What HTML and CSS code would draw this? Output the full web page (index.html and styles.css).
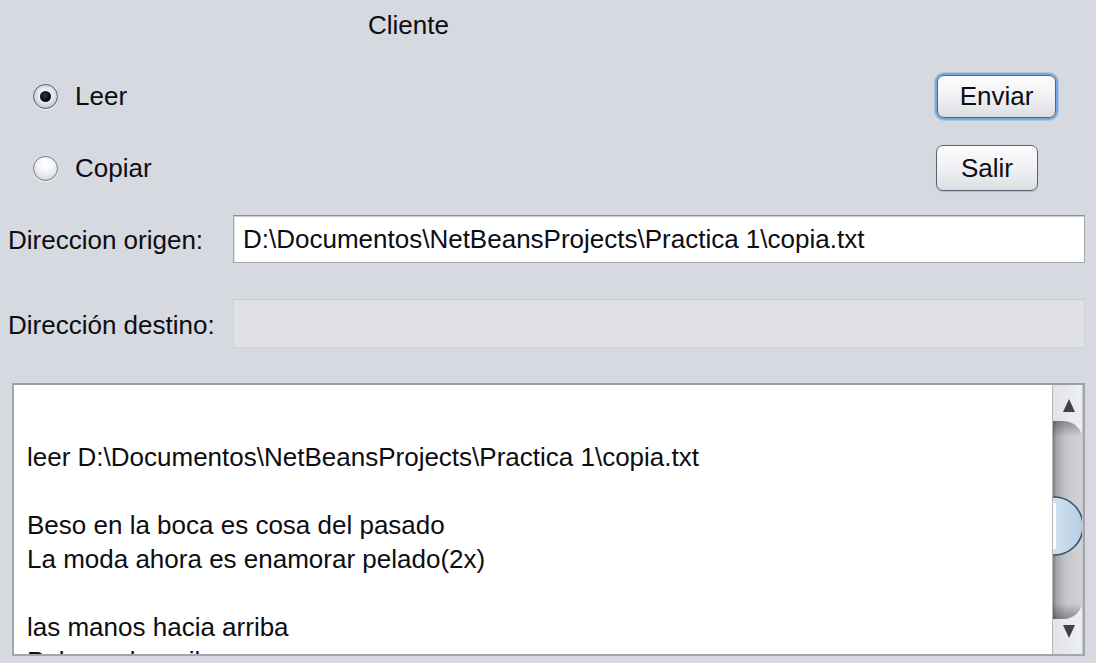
FILE: index.html
```html
<!DOCTYPE html>
<html>
<head>
<meta charset="utf-8">
<title>Cliente</title>
<link rel="stylesheet" href="styles.css">
</head>
<body>
<div class="window">
  <div class="title">Cliente</div>

  <div class="row row-leer">
    <label class="radio"><span class="radio-dot checked"></span><span class="radio-text">Leer</span></label>
    <div class="btn-cell"><button class="btn btn-enviar">Enviar</button></div>
  </div>

  <div class="row row-copiar">
    <label class="radio"><span class="radio-dot"></span><span class="radio-text">Copiar</span></label>
    <div class="btn-cell"><button class="btn btn-salir">Salir</button></div>
  </div>

  <div class="field-row row-origen">
    <span class="field-label">Direccion origen:</span>
    <div class="field">D:\Documentos\NetBeansProjects\Practica 1\copia.txt</div>
  </div>

  <div class="field-row row-destino">
    <span class="field-label">Dirección destino:</span>
    <div class="field disabled"></div>
  </div>

  <div class="textarea">
    <div class="text-viewport">
      <div class="text-content">
        <div class="line">&nbsp;</div>
        <div class="line">&nbsp;</div>
        <div class="line">leer D:\Documentos\NetBeansProjects\Practica 1\copia.txt</div>
        <div class="line">&nbsp;</div>
        <div class="line">Beso en la boca es cosa del pasado</div>
        <div class="line">La moda ahora es enamorar pelado(2x)</div>
        <div class="line">&nbsp;</div>
        <div class="line">las manos hacia arriba</div>
        <div class="line">Palmas de arriba</div>
      </div>
    </div>
    <svg class="scrollbar" width="31" height="269" viewBox="0 0 31 269">
      <defs>
        <linearGradient id="trackG" x1="0" y1="0" x2="1" y2="0">
          <stop offset="0" stop-color="#6e7075"/>
          <stop offset="0.15" stop-color="#a4a6aa"/>
          <stop offset="0.45" stop-color="#c5c6c9"/>
          <stop offset="1" stop-color="#d3d4d7"/>
        </linearGradient>
        <linearGradient id="shadeG" x1="0" y1="0" x2="0" y2="1">
          <stop offset="0" stop-color="#000" stop-opacity="0.3"/>
          <stop offset="0.08" stop-color="#000" stop-opacity="0"/>
          <stop offset="0.92" stop-color="#000" stop-opacity="0"/>
          <stop offset="1" stop-color="#000" stop-opacity="0.32"/>
        </linearGradient>
        <linearGradient id="knobG" x1="0" y1="0" x2="1" y2="0">
          <stop offset="0" stop-color="#e9f2f9"/>
          <stop offset="0.5" stop-color="#cfe2f0"/>
          <stop offset="1" stop-color="#b5cfe3"/>
        </linearGradient>
        <linearGradient id="btnG" x1="0" y1="0" x2="1" y2="0">
          <stop offset="0" stop-color="#e2e3e6"/>
          <stop offset="1" stop-color="#eeeff1"/>
        </linearGradient>
      </defs>
      <rect x="0" y="0" width="31" height="269" fill="url(#btnG)"/>
      <path d="M0,36 H11 A20,20 0 0 1 31,56 V214 A20,20 0 0 1 11,234 H0 Z" fill="url(#trackG)"/>
      <path d="M0,36 H11 A20,20 0 0 1 31,56 V214 A20,20 0 0 1 11,234 H0 Z" fill="url(#shadeG)"/>
      <circle cx="2" cy="141" r="29" fill="url(#knobG)" stroke="#3d546b" stroke-width="1.6"/>
      <rect x="1" y="118" width="3" height="46" fill="#ffffff" opacity="0.9"/>
      <rect x="0" y="0" width="1" height="269" fill="#b3b6bb"/>
      <rect x="30" y="0" width="1" height="269" fill="#c4c6ca"/>
      <polygon points="11,27 23,27 17,14" fill="#3f4145"/>
      <polygon points="11,240 23,240 17,253" fill="#3f4145"/>
    </svg>
  </div>
</div>
</body>
</html>
```

FILE: styles.css
```css
* {
  box-sizing: border-box;
}

body {
  margin: 0;
  background: #d6d9df;
  font-family: "Liberation Sans", Arial, sans-serif;
  font-size: 26px;
  color: #0d0d12;
}

.window {
  width: 1096px;
  height: 663px;
  overflow: hidden;
}

.title {
  height: 50px;
  line-height: 50px;
  padding-left: 368px;
}

.row {
  display: grid;
  grid-template-columns: 935px auto;
  align-items: center;
}

.row-leer {
  margin-top: 23px;
  height: 47px;
}

.row-copiar {
  margin-top: 25px;
  height: 46px;
}

.radio {
  display: flex;
  align-items: center;
  padding-left: 33px;
  gap: 17px;
}

.radio-dot {
  width: 25px;
  height: 25px;
  border-radius: 50%;
  border: 1px solid #747d8a;
  background: radial-gradient(circle at 50% 30%, #ffffff 0%, #f1f2f4 45%, #d5d8dd 85%, #c3c7ce 100%);
  box-shadow: 0 1px 1px rgba(255, 255, 255, 0.8), inset 0 -1px 1px rgba(0, 0, 0, 0.06);
  display: flex;
  align-items: center;
  justify-content: center;
}

.radio-dot.checked {
  border-color: #56616f;
  background: radial-gradient(circle at 50% 45%, #ffffff 0%, #e6edf3 40%, #b7c5d3 80%, #8c9cae 100%);
}

.radio-dot.checked::after {
  content: "";
  width: 11px;
  height: 11px;
  border-radius: 50%;
  background: radial-gradient(circle at 45% 40%, #3a3a3a, #000000 65%, #555555 100%);
}

.btn-cell {
  display: flex;
  align-items: center;
}

.btn {
  font: inherit;
  color: #0d0d12;
  border: 1px solid #5a6170;
  border-radius: 7px;
  background: linear-gradient(#fcfcfd 0%, #f1f2f4 45%, #e4e6ea 80%, #d9dce1 100%);
  box-shadow: 0 1px 1px rgba(0, 0, 0, 0.15);
  padding: 0;
  cursor: default;
}

.btn-enviar {
  margin-left: 2px;
  width: 119px;
  height: 43px;
  box-shadow: 0 0 0 2px #78a9dd, 0 0 0 3px rgba(120, 169, 221, 0.4);
}

.btn-salir {
  margin-left: 1px;
  width: 102px;
  height: 46px;
}

.field-row {
  display: grid;
  grid-template-columns: 233px 1fr;
  align-items: center;
  padding-right: 11px;
}

.row-origen {
  margin-top: 24px;
  height: 48px;
}

.row-destino {
  margin-top: 36px;
  height: 49px;
}

.field-label {
  padding-left: 8px;
  padding-top: 3px;
  white-space: nowrap;
}

.field {
  height: 100%;
  background: #ffffff;
  border: 1px solid #a3a6ab;
  border-top-color: #8b8e93;
  box-shadow: inset 0 1px 0 #c9cbce, inset 1px 0 0 #e4e5e7;
  padding-left: 9px;
  line-height: 46px;
  white-space: nowrap;
  overflow: hidden;
}

.field.disabled {
  background: #dfe1e5;
  border: 1px solid #d0d2d7;
  border-top-color: #c8cacf;
  box-shadow: none;
}

.textarea {
  margin-top: 35px;
  margin-left: 12px;
  width: 1073px;
  height: 273px;
  border: 2px solid #a3a6ac;
  border-top-color: #9b9ea4;
  display: flex;
  background: #ffffff;
}

.text-viewport {
  flex: 1;
  overflow: hidden;
}

.text-content {
  margin-top: -13px;
  padding-left: 13px;
  line-height: 34px;
  white-space: nowrap;
}

.scrollbar {
  display: block;
  flex: none;
}
```
